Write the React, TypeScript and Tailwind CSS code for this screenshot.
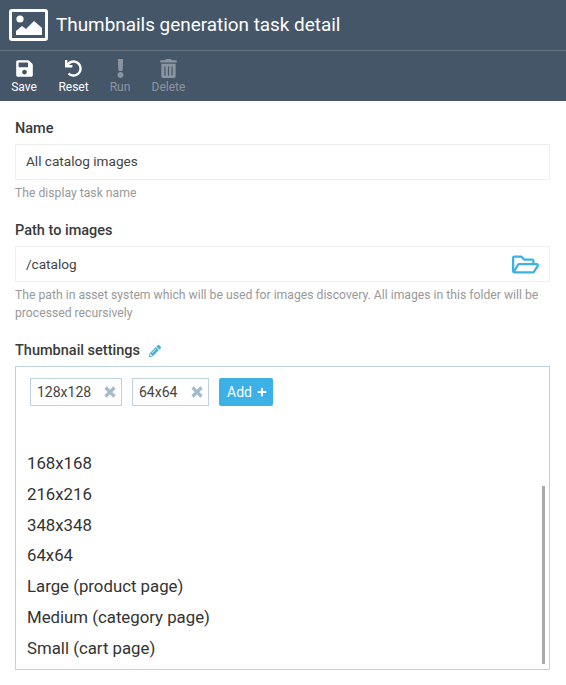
import { FaExclamation, FaPencilAlt, FaPlus, FaRegFolderOpen, FaSave, FaTrashAlt, FaUndo } from "react-icons/fa";

const toolbar = [
  { label: "Save", icon: <FaSave size={19} />, active: true, width: "w-[48px]" },
  { label: "Reset", icon: <FaUndo size={17} />, active: true, width: "w-[51px]" },
  { label: "Run", icon: <FaExclamation size={19} />, active: false, width: "w-[42px]" },
  { label: "Delete", icon: <FaTrashAlt size={19} />, active: false, width: "w-[55px]" },
];

const options = [
  "168x168",
  "216x216",
  "348x348",
  "64x64",
  "Large (product page)",
  "Medium (category page)",
  "Small (cart page)",
];

function Tag({ label, width }: { label: string; width: string }) {
  return (
    <div className={`flex h-7 items-center justify-between border border-[#bcd3e0] pr-[5px] pb-[1px] pl-[6px] text-sm text-[#444] ${width}`}>
      <span>{label}</span>
      <svg viewBox="0 0 12 12" className="h-[12px] w-[12px]" stroke="#a3bccb" strokeWidth="3.2">
        <path d="M1.5 1.5l9 9M10.5 1.5l-9 9" />
      </svg>
    </div>
  );
}

export default function App() {
  return (
    <div className="h-[685px] w-[566px] overflow-hidden bg-white font-['Roboto',sans-serif]">
      <header className="bg-[#465669] text-white">
        <div className="flex h-[51px] items-center border-b border-[#64727f] pl-[9px]">
          <div className="flex h-[32px] w-[39px] items-center justify-center rounded-[3px] border-[3px] border-white">
            <svg viewBox="0 0 33 26" className="h-[26px] w-[33px]" fill="white">
              <circle cx="8" cy="7" r="3.6" />
              <path d="M4 23v-4l6-5 4 3 8-8 8 7v7z" />
            </svg>
          </div>
          <h1 className="ml-[8px] text-[18.9px] leading-6">Thumbnails generation task detail</h1>
        </div>
        <div className="flex h-[50px] items-start pt-[7px]">
          {toolbar.map((item) => (
            <div
              key={item.label}
              className={`flex flex-col items-center ${item.width} ${item.active ? "text-white" : "text-[#8b95a1]"}`}
            >
              <div className="flex h-[20px] items-center">{item.icon}</div>
              <span className="mt-[1px] text-xs leading-4">{item.label}</span>
            </div>
          ))}
        </div>
      </header>

      <main className="pr-[16px] pl-[15px]">
        <section className="pt-[20px]">
          <label className="block text-[14.5px] leading-4 font-medium text-[#3a3a3a]">Name</label>
          <div className="mt-[7px] flex h-9 items-center border border-[#eeeeee] px-[10px] pb-[1px] text-[13.6px] text-[#444]">
            All catalog images
          </div>
          <p className="mt-[5px] text-[12.2px] leading-4 text-[#999]">The display task name</p>
        </section>

        <section className="pt-[22px]">
          <label className="block text-[14.5px] leading-4 font-medium text-[#3a3a3a]">Path to images</label>
          <div className="mt-[7px] flex h-9 items-center justify-between border border-[#eeeeee] pr-[10px] pl-[10px] text-[13.6px] text-[#444]">
            <span>/catalog</span>
            <FaRegFolderOpen size={27} className="text-[#3db0e8]" />
          </div>
          <p className="mt-[4px] text-[12.2px] leading-[18px] text-[#999]">
            The path in asset system which will be used for images discovery. All images in this folder will be processed recursively
          </p>
        </section>

        <section className="pt-[21px]">
          <div className="flex items-center gap-[9px]">
            <label className="text-[14.5px] leading-4 font-medium text-[#3a3a3a]">Thumbnail settings</label>
            <FaPencilAlt size={12} className="text-[#3db0e8]" />
          </div>
          <div className="relative mt-[7px] h-[304px] border border-[#bcd3e0] pl-[11px]">
            <div className="flex items-center gap-[10px] pt-[11px] pl-[3px]">
              <Tag label="128x128" width="w-[92px]" />
              <Tag label="64x64" width="w-[77px]" />
              <button className="flex h-7 items-center gap-[5px] rounded-[2px] bg-[#3db0e8] pr-[6px] pb-[1px] pl-2 text-sm text-white">
                Add <FaPlus size={10} />
              </button>
            </div>
            <ul className="mt-[42px] text-[16.8px] text-[#333]">
              {options.map((option) => (
                <li key={option} className="h-[30.8px] leading-[31px]">{option}</li>
              ))}
            </ul>
            <div className="absolute top-[119px] right-[4px] h-[178px] w-[3px] bg-[#aaaaaa]" />
          </div>
        </section>
      </main>
    </div>
  );
}
